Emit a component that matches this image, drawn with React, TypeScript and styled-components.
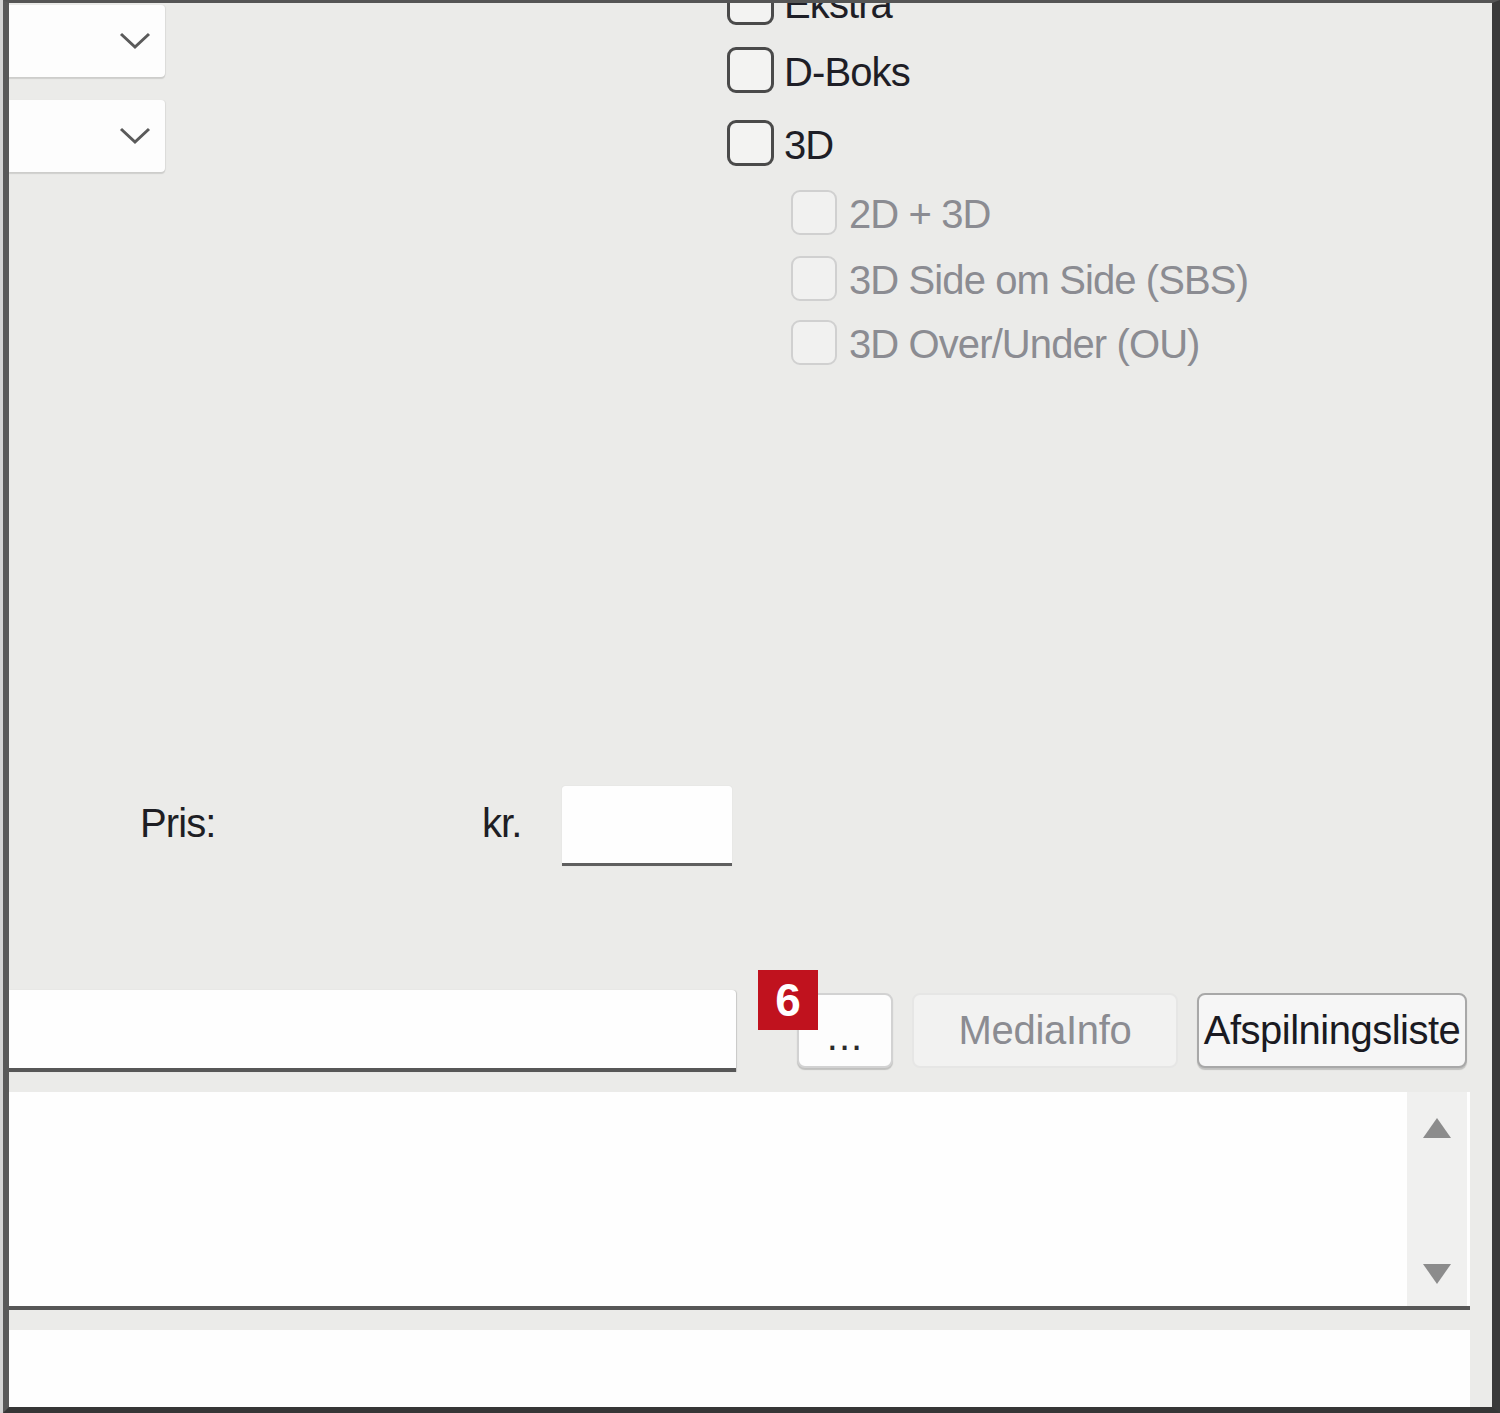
import React from "react";
import styled, { createGlobalStyle } from "styled-components";

const Global = createGlobalStyle`
  html, body { margin: 0; padding: 0; }
  body {
    background: #d4d4d4;
    font-family: "Liberation Sans", Arial, sans-serif;
    padding-left: 3px;
  }
`;

const Frame = styled.div`
  box-sizing: border-box;
  width: 1497px;
  height: 1413px;
  background: #ebebe9;
  border-top: 3px solid #555555;
  border-left: 6px solid #595959;
  border-right: 8px solid #3a3a3a;
  border-bottom: 6px solid #363636;
  overflow: hidden;
  display: flex;
  flex-direction: column;
  font-family: "Liberation Sans", Arial, sans-serif;
  font-size: 40px;
  letter-spacing: -0.9px;
  color: #1e1e24;
`;

const TopArea = styled.div`
  height: 783px;
  flex: none;
  display: flex;
  align-items: flex-start;
`;

const ComboColumn = styled.div`
  width: 156px;
  display: flex;
  flex-direction: column;
  gap: 23px;
  margin-top: 2px;
`;

const Combo = styled.div`
  height: 72px;
  background: #fdfdfd;
  box-shadow: 0 2px 1px rgba(0, 0, 0, 0.12), 1px 0 1px rgba(0, 0, 0, 0.06);
  border-radius: 0 4px 4px 0;
  display: flex;
  align-items: center;
  justify-content: flex-end;
  padding-right: 14px;
  box-sizing: border-box;
`;

const CheckList = styled.div`
  margin-left: 562px;
  margin-top: -24px;
  display: flex;
  flex-direction: column;
`;

const CheckRow = styled.div<{ $mt: number; $sub?: boolean }>`
  display: flex;
  align-items: center;
  gap: ${(p) => (p.$sub ? 12 : 10)}px;
  margin-top: ${(p) => p.$mt}px;
  margin-left: ${(p) => (p.$sub ? 64 : 0)}px;
  height: 46px;
`;

const Box = styled.div<{ $disabled?: boolean }>`
  box-sizing: border-box;
  width: ${(p) => (p.$disabled ? 46 : 47)}px;
  height: ${(p) => (p.$disabled ? 45 : 46)}px;
  border-radius: 9px;
  border: ${(p) => (p.$disabled ? "2px solid #d0d0d0" : "3px solid #4a4a4a")};
  background: ${(p) => (p.$disabled ? "#f1f1f0" : "#f3f3f2")};
  flex: none;
`;

const Label = styled.span<{ $disabled?: boolean }>`
  color: ${(p) => (p.$disabled ? "#8b8c92" : "#1e1e26")};
  white-space: nowrap;
  line-height: 46px;
  padding-top: 4px;
`;

const PriceRow = styled.div`
  height: 80px;
  flex: none;
  display: flex;
  align-items: center;
  padding-left: 131px;
`;

const PriceLabel = styled.span`
  width: 342px;
  flex: none;
  margin-top: -6px;
`;

const KrLabel = styled.span`
  width: 80px;
  flex: none;
  margin-top: -6px;
`;

const PriceInput = styled.div`
  width: 170px;
  height: 80px;
  box-sizing: border-box;
  background: #fefefe;
  border-bottom: 3px solid #5f5f5f;
  border-radius: 3px 3px 0 0;
  box-shadow: 0 0 1px rgba(0, 0, 0, 0.15);
`;

const FileRow = styled.div`
  margin-top: 124px;
  height: 82px;
  flex: none;
  display: flex;
  align-items: flex-start;
`;

const FileInput = styled.div`
  width: 727px;
  height: 82px;
  box-sizing: border-box;
  background: #fefefe;
  border-bottom: 4px solid #575757;
  box-shadow: 1px 0 1px rgba(0, 0, 0, 0.15);
  border-radius: 0 4px 0 0;
  flex: none;
`;

const Button = styled.div<{ $w: number; $ml: number; $variant: "normal" | "disabled" | "focus" }>`
  position: relative;
  box-sizing: border-box;
  width: ${(p) => p.$w}px;
  height: 75px;
  margin-top: 3px;
  margin-left: ${(p) => p.$ml}px;
  flex: none;
  display: flex;
  align-items: center;
  justify-content: center;
  border-radius: 8px;
  white-space: nowrap;
  overflow: visible;
  background: ${(p) => (p.$variant === "disabled" ? "#f2f2f1" : p.$variant === "focus" ? "#f6f6f6" : "#fdfdfd")};
  border: ${(p) =>
    p.$variant === "disabled" ? "2px solid #e6e6e5" : p.$variant === "focus" ? "2px solid #a8a8a8" : "2px solid #d2d2d2"};
  box-shadow: ${(p) => (p.$variant === "disabled" ? "none" : "0 2px 1px rgba(0,0,0,0.18)")};
  color: ${(p) => (p.$variant === "disabled" ? "#8b8c92" : "#1a1a22")};
  letter-spacing: ${(p) => (p.$variant === "focus" ? "-0.5px" : "-0.3px")};
`;

const Dots = styled.span`
  letter-spacing: 1px;
  margin-top: 12px;
  color: #2a2a2a;
`;

const Badge = styled.div`
  position: absolute;
  left: -41px;
  top: -25px;
  width: 60px;
  height: 60px;
  background: #c0121e;
  color: #ffffff;
  font-weight: bold;
  font-size: 46px;
  letter-spacing: 0;
  display: flex;
  align-items: center;
  justify-content: center;
  line-height: 1;
`;

const TextArea = styled.div`
  margin-top: 20px;
  width: 1461px;
  height: 218px;
  flex: none;
  box-sizing: border-box;
  background: #fefefe;
  border-bottom: 4px solid #575757;
  display: flex;
  justify-content: flex-end;
`;

const ScrollBar = styled.div`
  width: 60px;
  margin-right: 3px;
  background: #f0f0ef;
  display: flex;
  flex-direction: column;
  align-items: center;
  justify-content: space-between;
  padding: 24px 0 20px;
  box-sizing: border-box;
`;

const BottomField = styled.div`
  margin-top: 20px;
  width: 1461px;
  height: 78px;
  flex: none;
  background: #fefefe;
`;

const Chevron = () => (
  <svg width="32" height="18" viewBox="0 0 32 18">
    <polyline points="2,2 16,15 30,2" fill="none" stroke="#5a5a5a" strokeWidth="3" />
  </svg>
);

const Arrow = ({ up }: { up?: boolean }) => (
  <svg width="32" height="24" viewBox="0 0 32 24">
    <polygon points={up ? "16,2 30,22 2,22" : "2,2 30,2 16,22"} fill="#8c8c8c" />
  </svg>
);

const mainChecks = [
  { label: "Ekstra", mt: 0 },
  { label: "D-Boks", mt: 22 },
  { label: "3D", mt: 27 },
];

const subChecks = [
  { label: "2D + 3D", mt: 23 },
  { label: "3D Side om Side (SBS)", mt: 20 },
  { label: "3D Over/Under (OU)", mt: 18 },
];

export default function App() {
  return (
    <>
      <Global />
      <Frame>
        <TopArea>
          <ComboColumn>
            <Combo>
              <Chevron />
            </Combo>
            <Combo>
              <Chevron />
            </Combo>
          </ComboColumn>
          <CheckList>
            {mainChecks.map((c) => (
              <CheckRow key={c.label} $mt={c.mt}>
                <Box />
                <Label>{c.label}</Label>
              </CheckRow>
            ))}
            {subChecks.map((c) => (
              <CheckRow key={c.label} $mt={c.mt} $sub>
                <Box $disabled />
                <Label $disabled>{c.label}</Label>
              </CheckRow>
            ))}
          </CheckList>
        </TopArea>
        <PriceRow>
          <PriceLabel>Pris:</PriceLabel>
          <KrLabel>kr.</KrLabel>
          <PriceInput />
        </PriceRow>
        <FileRow>
          <FileInput />
          <Button $w={96} $ml={61} $variant="normal">
            <Badge>6</Badge>
            <Dots>...</Dots>
          </Button>
          <Button $w={266} $ml={19} $variant="disabled">
            MediaInfo
          </Button>
          <Button $w={270} $ml={19} $variant="focus">
            Afspilningsliste
          </Button>
        </FileRow>
        <TextArea>
          <ScrollBar>
            <Arrow up />
            <Arrow />
          </ScrollBar>
        </TextArea>
        <BottomField />
      </Frame>
    </>
  );
}
